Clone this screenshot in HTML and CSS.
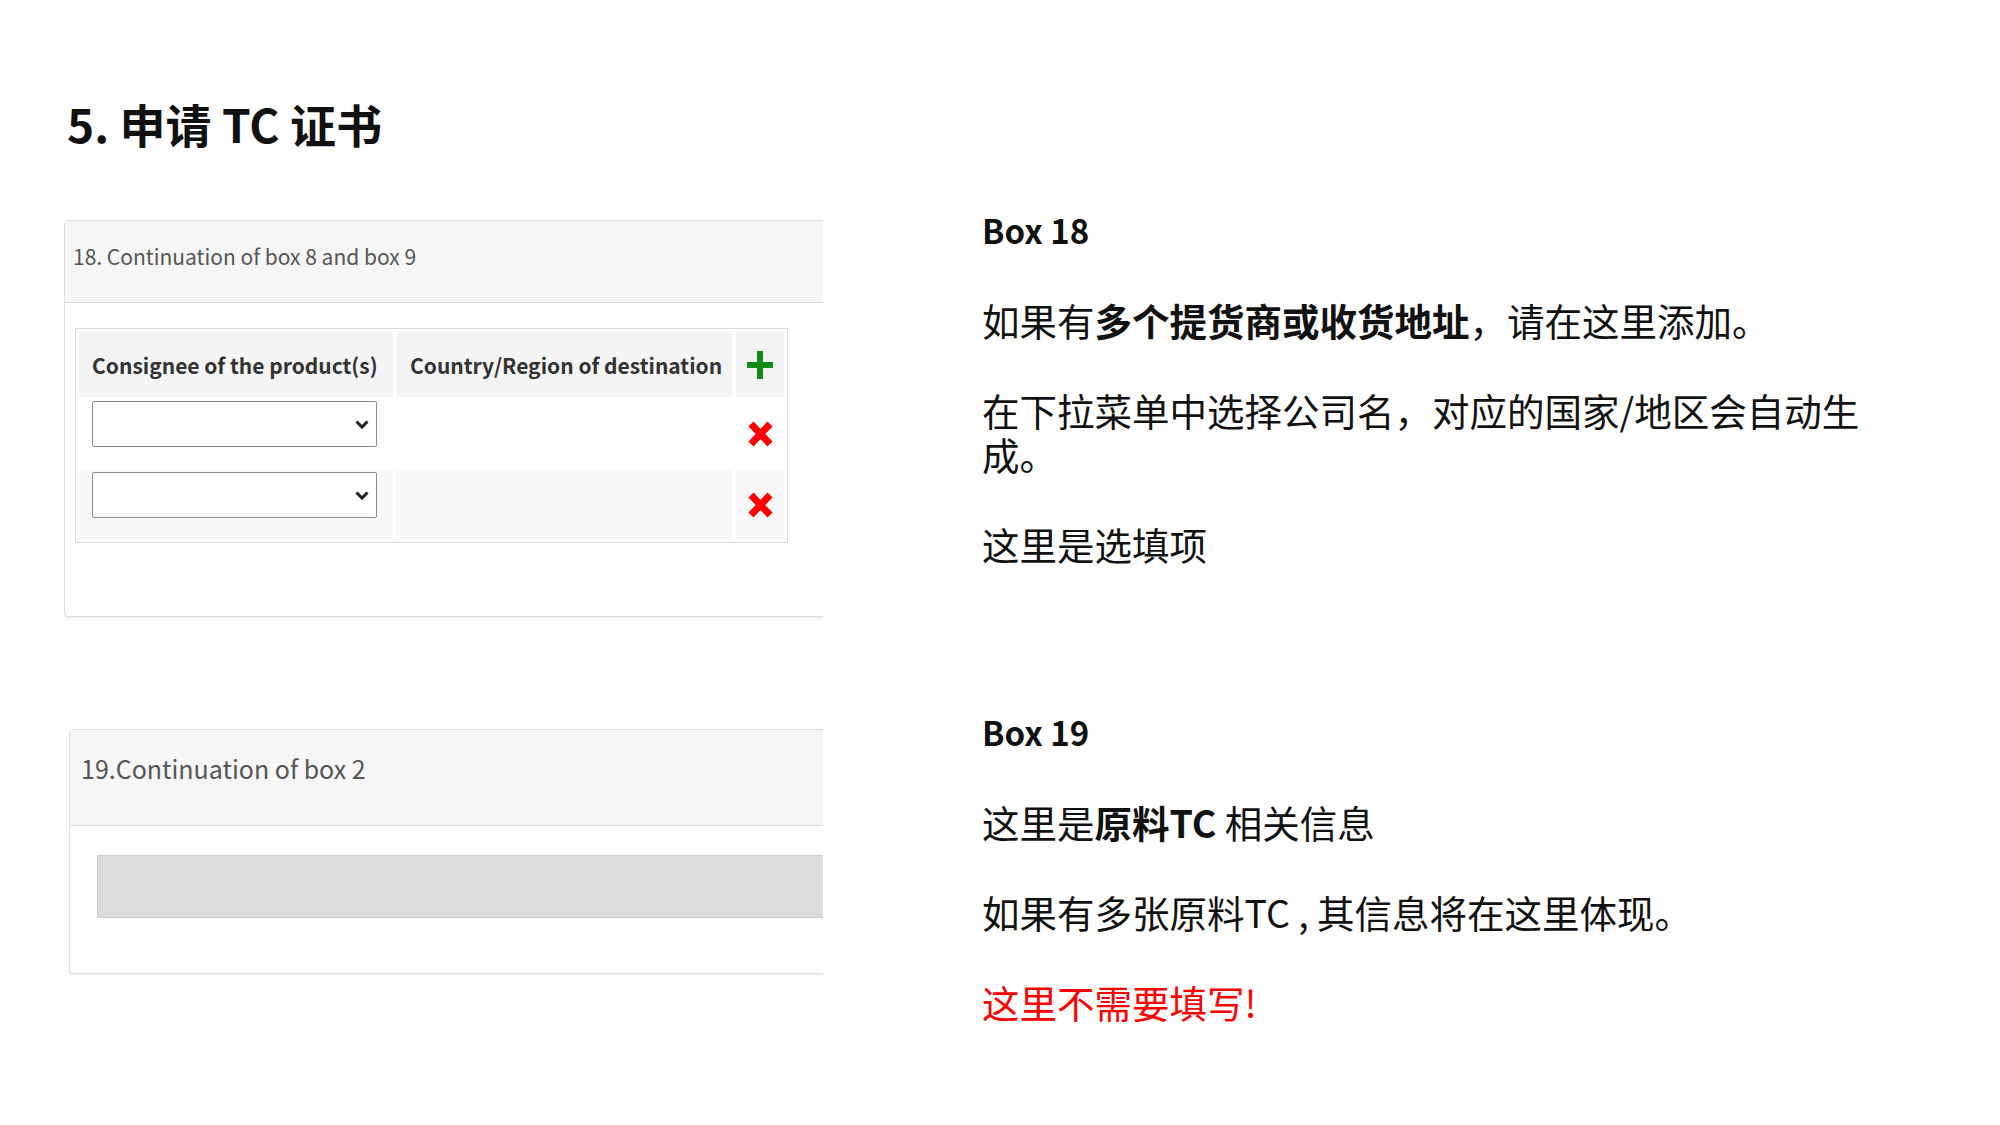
FILE: index.html
```html
<!DOCTYPE html>
<html lang="zh-CN">
<head>
    <meta charset="UTF-8">
    <meta name="viewport" content="width=device-width, initial-scale=1.0">
    <title>5. 申请 TC 证书</title>
    <link rel="stylesheet" href="styles.css">
</head>
<body>
    <div class="slide">
        <h1 class="title">5. 申请 TC 证书</h1>

        <div class="content">
            <div class="shots">
                <div class="panel panel-18">
                    <div class="panel-head">18. Continuation of box 8 and box 9</div>
                    <div class="panel-body">
                        <div class="grid">
                            <div class="cell head">Consignee of the product(s)</div>
                            <div class="cell head">Country/Region of destination</div>
                            <div class="cell head icon">
                                <svg width="26" height="28" viewBox="0 0 26 28"><path d="M10 0h6v11h10v6H16v11h-6V17H0v-6h10z" fill="#13891a"/></svg>
                            </div>

                            <div class="cell">
                                <div class="select">
                                    <svg width="14" height="9" viewBox="0 0 14 9"><polyline points="1.5,1.5 7,7 12.5,1.5" fill="none" stroke="#222" stroke-width="3"/></svg>
                                </div>
                            </div>
                            <div class="cell"></div>
                            <div class="cell icon">
                                <svg width="25" height="26" viewBox="0 0 25 26"><path d="M3 3L22 23M22 3L3 23" stroke="#ff0000" stroke-width="7"/></svg>
                            </div>

                            <div class="cell alt">
                                <div class="select">
                                    <svg width="14" height="9" viewBox="0 0 14 9"><polyline points="1.5,1.5 7,7 12.5,1.5" fill="none" stroke="#222" stroke-width="3"/></svg>
                                </div>
                            </div>
                            <div class="cell alt"></div>
                            <div class="cell alt icon">
                                <svg width="25" height="26" viewBox="0 0 25 26"><path d="M3 3L22 23M22 3L3 23" stroke="#ff0000" stroke-width="7"/></svg>
                            </div>
                        </div>
                    </div>
                </div>

                <div class="panel panel-19">
                    <div class="panel-head">19.Continuation of box 2</div>
                    <div class="panel-body">
                        <div class="readonly"></div>
                    </div>
                </div>
            </div>

            <div class="notes">
                <section class="note">
                    <h2>Box 18</h2>
                    <p>如果有<b>多个提货商或收货地址</b>，请在这里添加。</p>
                    <p>在下拉菜单中选择公司名，对应的国家/地区会自动生成。</p>
                    <p>这里是选填项</p>
                </section>
                <section class="note note-19">
                    <h2>Box 19</h2>
                    <p>这里是<b>原料TC</b> 相关信息</p>
                    <p>如果有多张原料TC , 其信息将在这里体现。</p>
                    <p class="warn">这里不需要填写!</p>
                </section>
            </div>
        </div>
    </div>
</body>
</html>
```

FILE: styles.css
```css
body {
    margin: 0;
    background: #fff;
    font-family: "Noto Sans CJK SC", "Noto Sans", sans-serif;
    color: #111;
}
.slide {
    width: 2000px;
    height: 1125px;
    padding: 93px 0 0 64px;
    box-sizing: border-box;
    overflow: hidden;
}
.title {
    margin: 0 0 0 3px;
    font-size: 46px;
    line-height: 60px;
    font-weight: 700;
}
.content {
    display: flex;
    margin-top: 55px;
}

/* left: cropped form screenshots */
.shots {
    width: 759px;
    padding-top: 12px;
    overflow: hidden;
    flex-shrink: 0;
}
.panel {
    width: 900px;
    border: 1px solid #dedede;
    border-radius: 4px;
    box-shadow: 0 1px 2px rgba(0, 0, 0, 0.08);
    background: #fff;
}
.panel-head {
    background: #f6f6f6;
    border-bottom: 1px solid #dcdcdc;
    color: #555;
}
.panel-18 .panel-head {
    padding: 21px 8px 32px;
    font-size: 21px;
    line-height: 28px;
}
.panel-18 .panel-body {
    padding: 25px 0 73px 10px;
}
.grid {
    display: grid;
    grid-template-columns: 314px 335px 48px;
    grid-template-rows: 65px 73px 69px;
    column-gap: 4px;
    width: max-content;
    padding: 3px;
    border: 1px solid #dddddd;
}
.cell {
    padding: 4px 13px 0;
}
.cell.head {
    display: flex;
    align-items: center;
    padding-top: 0;
    background: #f4f4f4;
    color: #333;
    font-size: 21px;
    font-weight: 700;
    white-space: nowrap;
}
.cell.alt {
    background: #f8f8f8;
    padding-top: 2px;
}
.cell.icon {
    display: flex;
    align-items: center;
    justify-content: center;
    padding: 0;
}
.select {
    width: 285px;
    height: 46px;
    border: 1px solid #8a8a8a;
    border-radius: 2px;
    background: #fff;
    display: flex;
    align-items: center;
    justify-content: flex-end;
    padding-right: 7px;
    box-sizing: border-box;
}

.panel-19 {
    margin: 112px 0 0 5px;
}
.panel-19 .panel-head {
    padding: 22px 11px 41px;
    font-size: 25px;
    line-height: 32px;
}
.panel-19 .panel-body {
    padding: 29px 0 55px 27px;
}
.readonly {
    height: 61px;
    background: #dcdcdc;
    border: 1px solid #cfcfcf;
    border-right: none;
}

/* right: explanations */
.notes {
    margin-left: 159px;
    width: 900px;
    font-size: 37.5px;
    line-height: 44px;
}
.note h2 {
    margin: 0;
    font-size: 33px;
    line-height: 44px;
    font-weight: 700;
}
.note p {
    margin: 46px 0 0;
}
.note b {
    font-weight: 700;
}
.note-19 {
    margin-top: 144px;
}
.warn {
    color: #ff0000;
}
```
